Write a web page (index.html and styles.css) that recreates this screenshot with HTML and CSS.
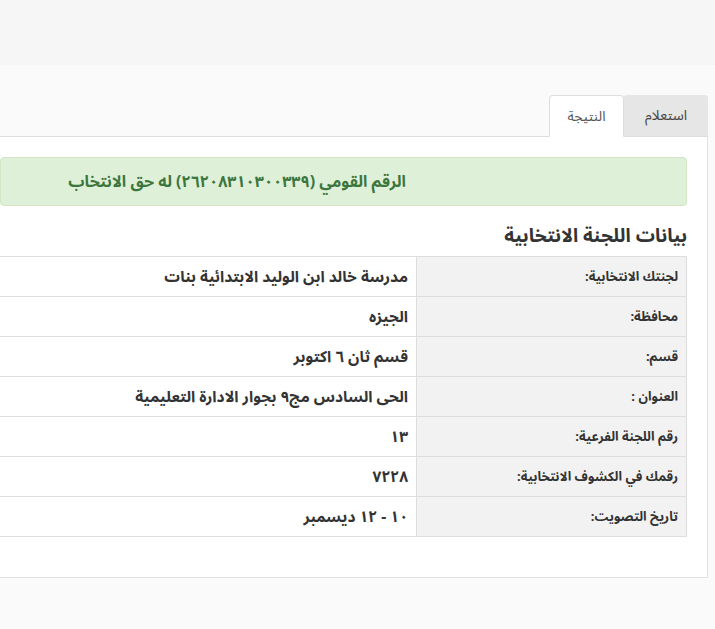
FILE: index.html
```html
<!DOCTYPE html>
<html lang="ar" dir="rtl">
<head>
<meta charset="utf-8">
<title>نتيجة الاستعلام</title>
<link rel="stylesheet" href="styles.css">
</head>
<body>
<div class="topbar"></div>
<div class="main">
  <ul class="tabs">
    <li class="tab">استعلام</li>
    <li class="tab active">النتيجة</li>
  </ul>
  <div class="panel">
    <div class="alert">الرقم القومي (٢٦٢٠٨٣١٠٣٠٠٣٣٩) له حق الانتخاب</div>
    <h3 class="heading">بيانات اللجنة الانتخابية</h3>
    <table class="info">
      <tr><th>لجنتك الانتخابية:</th><td>مدرسة خالد ابن الوليد الابتدائية بنات</td></tr>
      <tr><th>محافظة:</th><td>الجيزه</td></tr>
      <tr><th>قسم:</th><td>قسم ثان ٦ اكتوبر</td></tr>
      <tr><th>العنوان :</th><td>الحى السادس مج٩ بجوار الادارة التعليمية</td></tr>
      <tr><th>رقم اللجنة الفرعية:</th><td>١٣</td></tr>
      <tr><th>رقمك في الكشوف الانتخابية:</th><td>٧٢٢٨</td></tr>
      <tr><th>تاريخ التصويت:</th><td>١٠ - ١٢ ديسمبر</td></tr>
    </table>
  </div>
</div>
</body>
</html>
```
FILE: styles.css
```css
html, body {
  margin: 0;
  padding: 0;
}
body {
  background: #f7f7f7;
  font-family: "Noto Sans Arabic", "DejaVu Sans", sans-serif;
  color: #333;
  direction: rtl;
  overflow: hidden;
}
.topbar {
  height: 65px;
  background: #f6f6f6;
}
.main {
  background: #fafafa;
  padding-top: 30px;
  padding-bottom: 52px;
}
.tabs {
  list-style: none;
  margin: 0 7px 0 0;
  padding: 0;
  display: flex;
  border-bottom: 1px solid #dddddd;
  height: 41px;
}
.tab {
  box-sizing: border-box;
  height: 41px;
  display: flex;
  align-items: center;
  justify-content: center;
  font-size: 14px;
  color: #444;
}
.tab:first-child {
  width: 84px;
  background: #e6e6e6;
  border-radius: 3px 3px 0 0;
}
.tab.active {
  width: 75px;
  height: 42px;
  background: #ffffff;
  border: 1px solid #dddddd;
  border-bottom-color: transparent;
  border-radius: 4px 4px 0 0;
  color: #555;
}
.panel {
  background: #ffffff;
  margin-right: 7px;
  border-right: 1px solid #e2e2e2;
  border-bottom: 1px solid #e2e2e2;
  padding: 20px 20px 40px 0;
}
.alert {
  background: #dff0d8;
  border: 1px solid #d3e6c3;
  border-radius: 4px;
  color: #3c763d;
  height: 47px;
  display: flex;
  align-items: center;
  padding-right: 280px;
  font-size: 16px;
  font-weight: bold;
}
.heading {
  margin: 18px 0 8px 0;
  font-size: 19px;
  font-weight: bold;
  color: #333;
  line-height: 24px;
}
.info {
  width: 100%;
  border-collapse: collapse;
}
.info th, .info td {
  height: 40px;
  box-sizing: border-box;
  border: 1px solid #dddddd;
  padding: 0 8px;
  text-align: right;
}
.info th {
  width: 270px;
  background: #f2f2f2;
  font-weight: bold;
  font-size: 13px;
  color: #333;
}
.info td {
  background: #ffffff;
  border-left: none;
  color: #333;
  font-size: 15.5px;
  font-weight: bold;
}
```
